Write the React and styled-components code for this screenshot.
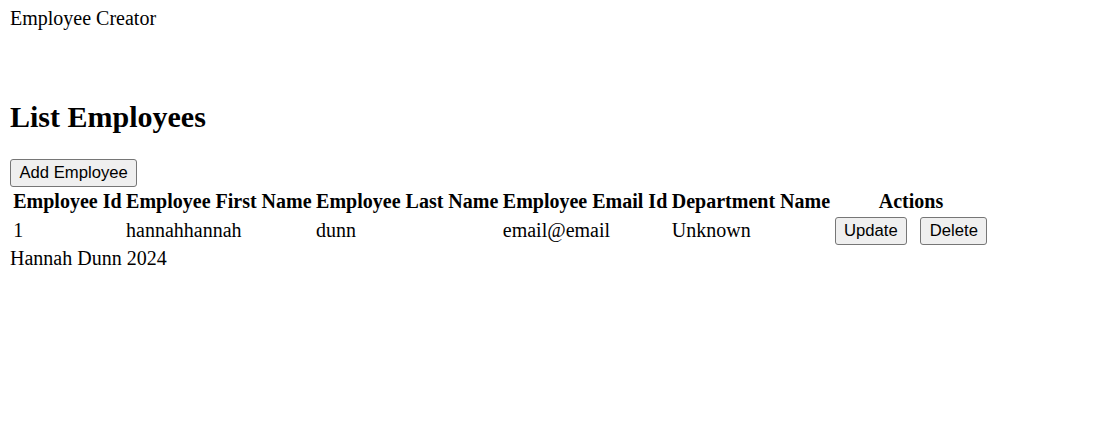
import React from "react";
import styled, { createGlobalStyle } from "styled-components";

const GlobalStyle = createGlobalStyle`
  html, body {
    background: #ffffff;
  }
  body {
    margin: 7px 10px 10px;
    font-family: "Liberation Serif", "Times New Roman", serif;
    font-size: 20px;
    color: #000000;
  }
`;

const Header = styled.header`
  line-height: normal;
  height: 68px;
`;

const Brand = styled.div`
  font-size: 20px;
`;

const Main = styled.main`
  display: block;
`;

const Title = styled.h2`
  font-size: 30px;
  font-weight: bold;
  margin: 25px 0;
`;

const Button = styled.button`
  font-family: "Liberation Sans", Arial, sans-serif;
  font-size: 16.67px;
  color: #000000;
  background: #efefef;
  border: 1px solid #767676;
  border-radius: 3px;
  padding: 2.75px 8.5px;
  margin-left: ${(p) => (p.$spaced ? "13px" : "0")};
  cursor: pointer;
`;

const Table = styled.table`
  border-collapse: separate;
  border-spacing: 2.5px;
`;

const Th = styled.th`
  font-weight: bold;
  text-align: center;
  padding: 1.25px;
  white-space: nowrap;
`;

const Td = styled.td`
  text-align: left;
  padding: 1px 1.25px 0;
  vertical-align: middle;
`;

const Footer = styled.footer`
  font-size: 20px;
`;

const employees = [
  {
    id: 1,
    firstName: "hannahhannah",
    lastName: "dunn",
    email: "email@email",
    department: "Unknown",
  },
];

export default function App() {
  return (
    <>
      <GlobalStyle />
      <Header>
        <Brand>Employee Creator</Brand>
      </Header>
      <Main>
        <Title>List Employees</Title>
        <Button>Add Employee</Button>
        <Table>
          <thead>
            <tr>
              <Th>Employee Id</Th>
              <Th>Employee First Name</Th>
              <Th>Employee Last Name</Th>
              <Th>Employee Email Id</Th>
              <Th>Department Name</Th>
              <Th>Actions</Th>
            </tr>
          </thead>
          <tbody>
            {employees.map((e) => (
              <tr key={e.id}>
                <Td>{e.id}</Td>
                <Td>{e.firstName}</Td>
                <Td>{e.lastName}</Td>
                <Td>{e.email}</Td>
                <Td>{e.department}</Td>
                <Td>
                  <Button>Update</Button>
                  <Button $spaced>Delete</Button>
                </Td>
              </tr>
            ))}
          </tbody>
        </Table>
      </Main>
      <Footer>Hannah Dunn 2024</Footer>
    </>
  );
}
